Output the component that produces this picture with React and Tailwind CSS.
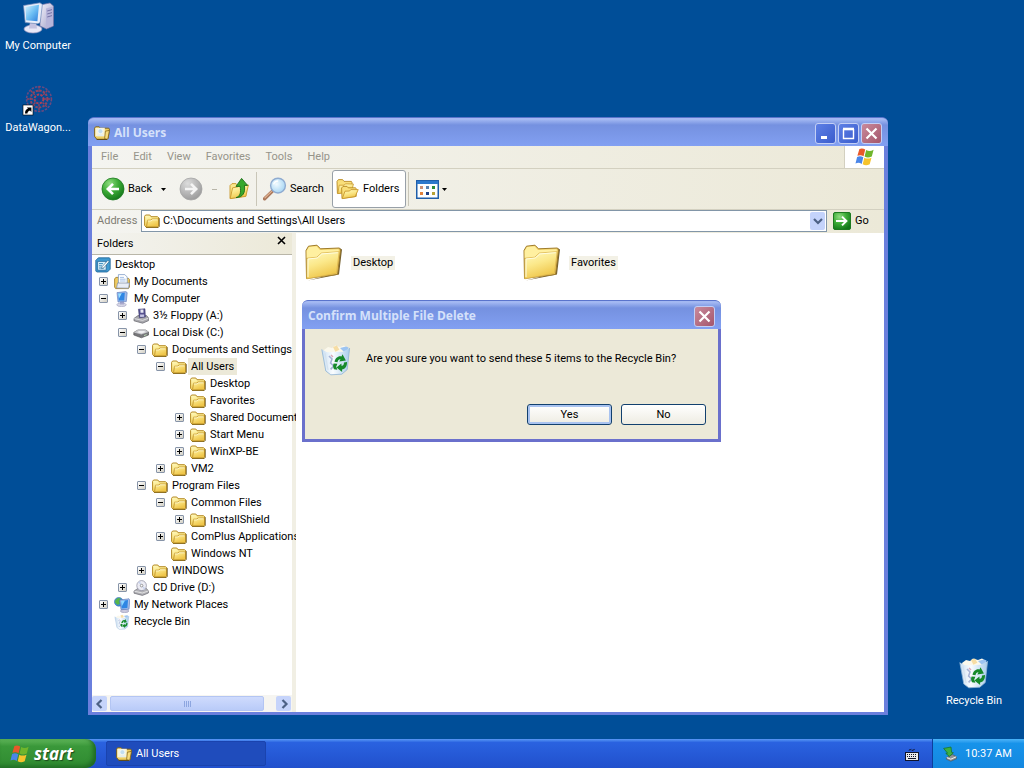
import React from 'react';
import clsx from 'clsx';

const menuItems = ['File', 'Edit', 'View', 'Favorites', 'Tools', 'Help'];

const tree = [
    { label: 'My Documents', icon: 'documents', state: 'closed' },
    {
        label: 'My Computer', icon: 'computer', state: 'open', children: [
            { label: '3½ Floppy (A:)', icon: 'floppy', state: 'closed' },
            {
                label: 'Local Disk (C:)', icon: 'disk', state: 'open', children: [
                    {
                        label: 'Documents and Settings', icon: 'folder', state: 'open', children: [
                            {
                                label: 'All Users', icon: 'folder', state: 'open', selected: true, children: [
                                    { label: 'Desktop', icon: 'folder' },
                                    { label: 'Favorites', icon: 'folder' },
                                    { label: 'Shared Documents', icon: 'folder', state: 'closed' },
                                    { label: 'Start Menu', icon: 'folder', state: 'closed' },
                                    { label: 'WinXP-BE', icon: 'folder', state: 'closed' },
                                ],
                            },
                            { label: 'VM2', icon: 'folder', state: 'closed' },
                        ],
                    },
                    {
                        label: 'Program Files', icon: 'folder', state: 'open', children: [
                            {
                                label: 'Common Files', icon: 'folder', state: 'open', children: [
                                    { label: 'InstallShield', icon: 'folder', state: 'closed' },
                                ],
                            },
                            { label: 'ComPlus Applications', icon: 'folder', state: 'closed' },
                            { label: 'Windows NT', icon: 'folder' },
                        ],
                    },
                    { label: 'WINDOWS', icon: 'folder', state: 'closed' },
                ],
            },
            { label: 'CD Drive (D:)', icon: 'cd', state: 'closed' },
        ],
    },
    { label: 'My Network Places', icon: 'network', state: 'closed' },
    { label: 'Recycle Bin', icon: 'bin' },
];

/* ---------- Icons ---------- */

// Gradients shared by all the icons below
const IconDefs = () => (
    <svg className="absolute h-0 w-0" aria-hidden="true">
        <defs>
            <linearGradient id="gFolder" x1="0" y1="0" x2="0.4" y2="1">
                <stop offset="0" stopColor="#fffbc4" />
                <stop offset="0.5" stopColor="#fbe88a" />
                <stop offset="1" stopColor="#efc64a" />
            </linearGradient>
            <linearGradient id="gScreen" x1="0" y1="0" x2="1" y2="1">
                <stop offset="0" stopColor="#d3f1ff" />
                <stop offset="0.5" stopColor="#6fc0f4" />
                <stop offset="1" stopColor="#2f7fdc" />
            </linearGradient>
            <linearGradient id="gCase" x1="0" y1="0" x2="1" y2="1">
                <stop offset="0" stopColor="#f4f3fb" />
                <stop offset="1" stopColor="#9d9cc6" />
            </linearGradient>
            <linearGradient id="gBin" x1="0" y1="0" x2="1" y2="0">
                <stop offset="0" stopColor="#c9def2" />
                <stop offset="0.4" stopColor="#fafdff" />
                <stop offset="1" stopColor="#a9cdec" />
            </linearGradient>
            <radialGradient id="gGreen" cx="0.35" cy="0.25" r="0.8">
                <stop offset="0" stopColor="#8fdc80" />
                <stop offset="0.5" stopColor="#3cab36" />
                <stop offset="1" stopColor="#13761a" />
            </radialGradient>
            <radialGradient id="gGrey" cx="0.35" cy="0.25" r="0.8">
                <stop offset="0" stopColor="#dcdcdc" />
                <stop offset="1" stopColor="#999999" />
            </radialGradient>
            <radialGradient id="gLens" cx="0.4" cy="0.4" r="0.7">
                <stop offset="0" stopColor="#f2fbff" />
                <stop offset="1" stopColor="#9fd2f2" />
            </radialGradient>
        </defs>
    </svg>
);

const FolderIcon = () => (
    <svg viewBox="0 0 16 16" className="h-4 w-4 shrink-0">
        <path d="M2 14.5h12.2l1-1V5.2l-.9-.6" fill="none" stroke="#6d5a22" strokeWidth="1" />
        <path d="M.6 12.4V3.3l1-1.3h4.2l1.2 1.7h6.6l.9.9v8.6l-.8.8H1.9z" fill="url(#gFolder)" stroke="#b58a24" strokeWidth="1" />
        <path d="M2.6 13.4l.9-6.2h3.2l1-1.2h6.4" fill="none" stroke="#c79a2e" strokeWidth="1" />
        <path d="M3.6 7.9h3.6l1-1.1h5.4" fill="none" stroke="#fffbd6" strokeWidth=".8" />
    </svg>
);

const BigFolderIcon = () => (
    <svg viewBox="0 0 38 38" className="h-[38px] w-[38px] shrink-0">
        <path d="M3 36.5L34 30.5 37 5.5l-2-1.3L32.5 29z" fill="#75602f" />
        <path d="M1.5 34.5L1 6.5 3.5 2.2l8.5-1 3.5 3.6 19-.8 1 2.2-3 24.2z" fill="#f2cf62" stroke="#9f7c2c" strokeWidth="1" />
        <path d="M1.6 7L4 3l7.6-.8L15 6l18.5-.7.6 3-18 .8-4.6 4.4-9.8.6z" fill="#fff0a0" />
        <path d="M1.8 34.8l.4-20.6 9.6-1 4.6-4.2 17.8-1.4-2.7 21.8z" fill="url(#gFolder)" stroke="#d9b04a" strokeWidth=".7" />
        <path d="M3 33V15l9.2-1 4.6-4.1 16-1.2" fill="none" stroke="#fffde0" strokeWidth="1" />
    </svg>
);

const SearchFolderIcon = () => (
    <svg viewBox="0 0 16 16" className="h-4 w-4 shrink-0">
        <path d="M.6 11.6V3.2l1-1.4h3.6l1 1.4h8.6l.6 1-1.2 9-1 1.2H3z" fill="#efcf62" stroke="#7b5d18" strokeWidth=".9" />
        <path d="M1.4 2.8h9.4v8.4H1.4z" fill="#f8f3d6" />
        <circle cx="6.4" cy="6.2" r="2.5" fill="#c3def0" stroke="#f8fcff" strokeWidth=".7" />
        <path d="M2.6 11.2c.5-2.6 6.6-2.8 7.6 0z" fill="#e3edf0" />
        <path d="M10.6 13.6l.8-7.4 4-.8-1.4 7.8-1 1.2z" fill="#f7dc7c" stroke="#7b5d18" strokeWidth=".7" />
        <path d="M2.6 14.4h10.6" stroke="#5e4a18" strokeWidth="1" />
    </svg>
);

const ComputerIcon = ({ className }) => (
    <svg viewBox="0 0 32 32" className={clsx('shrink-0', className)}>
        <path d="M18 3l10-2 3.5 3v20l-7 3-6.5-3z" fill="url(#gCase)" stroke="#7876a8" strokeWidth=".7" />
        <path d="M24 6.4l7-2v19.4l-7 2.8z" fill="#b7b5da" />
        <path d="M25.2 9l4.8-1.4M25.2 12l4.8-1.4M25.2 15l4.8-1.4" stroke="#7472a6" strokeWidth="1" />
        <ellipse cx="11" cy="27" rx="9" ry="4" fill="#e9e8f6" stroke="#9a98c0" strokeWidth=".7" />
        <path d="M8 20h6l1 6.5H7z" fill="#c4c2e0" />
        <path d="M1.5 3.5L18 .8l2.4 1.6-2.2 18.2-2.4 1.2-12.6-1.2z" fill="#e8eefa" stroke="#6d87b8" strokeWidth=".7" />
        <path d="M3.4 5L17 2.8l-1.6 16.4-11.2-.9z" fill="url(#gScreen)" />
    </svg>
);

const SmallComputerIcon = () => (
    <svg viewBox="0 0 16 16" className="h-4 w-4 shrink-0">
        <ellipse cx="7.5" cy="13.8" rx="4.8" ry="1.8" fill="#d7d7e6" stroke="#8f8fb2" strokeWidth=".5" />
        <path d="M6 10h4v3.5H6z" fill="#a9a9cc" />
        <path d="M3 1.6L11.8.6l1.4 1-.9 9-8.3.4z" fill="#9fb9e8" stroke="#5776b8" strokeWidth=".6" />
        <path d="M4 2.6l6.8-.8-.6 7.6-5.4.2z" fill="#2f86e4" />
        <path d="M4 2.6l3.8-.4L5 7.4z" fill="#9fe0ff" />
    </svg>
);

const RecycleIcon = ({ className }) => (
    <svg viewBox="0 0 32 32" className={clsx('shrink-0', className)}>
        <path d="M4 6l4-3 4 1 3-2.6L20 3l4-1.4L28 4v4L5 10z" fill="#fbf8ec" />
        <path d="M13 3l4-1.6 2.4 4.4-4 2z" fill="#f6dda4" />
        <path d="M20 4l6-1.6 2.6 1-3 6z" fill="#9cc4f2" />
        <path d="M1.8 5.4L7 8.2l16-.4L29.6 4l-2.4 21.6-5.4 4.6-11 .6L5.8 27z" fill="url(#gBin)" />
        <path d="M1.8 5.4L5.8 27l5 3.8 11-.6 5.4-4.6L29.6 4" fill="none" stroke="#8fb4d6" strokeWidth=".8" />
        <path d="M5 9l3 17" stroke="#d3e1ee" strokeWidth="1.2" />
        <path d="M9 12l3 3-1.4 4 3 3-3 3.4" fill="none" stroke="#a7b3d6" strokeWidth="1.6" />
        <path d="M11 11l2 2" stroke="#d9a9b8" strokeWidth="1.4" />
        <g fill="#168a2a">
            <path d="M14.5 17.8c.8-4 4-6.4 7-5.4l1-2.2 3.4 6.2-6.6 1 1.2-2.2c-1.6-.2-2.6 1-3 3z" />
            <path d="M27 18c.2 4.4-2 7.4-5 7.4l.2 2.6-5.8-4.6 5-4 .2 2.6c1.6-.2 2.4-1.4 2.4-3.4z" />
            <path d="M13.6 19.6l3.8.2-1.2 3 1.2 3-3.4-.6c-1-1.8-1.2-3.8-.4-5.6z" />
        </g>
    </svg>
);

const DocumentsIcon = () => (
    <svg viewBox="0 0 16 16" className="h-4 w-4 shrink-0">
        <path d="M.6 13V5l1.2-1.6h3l1 1h8.8l.8 1V13l-1 1.6H1.6z" fill="#f0cd62" stroke="#9c7720" strokeWidth=".8" />
        <path d="M4.4.6h6.4l2.4 2.4v8.4H4.4z" fill="#fff" stroke="#6f8fc0" strokeWidth=".7" />
        <path d="M6 3.4h4M6 5.2h5.6M6 7h5.6" stroke="#8fb0e0" strokeWidth=".8" />
        <path d="M2.6 14l.9-5h12l-1 5.2z" fill="#e9edf5" stroke="#7c8aa5" strokeWidth=".7" />
    </svg>
);

const FloppyIcon = () => (
    <svg viewBox="0 0 16 16" className="h-4 w-4 shrink-0">
        <path d="M1 10.4L5 7.6h8.6l2 2.4v2.6l-6 2.6L1 12.8z" fill="#a9a9ae" stroke="#63636a" strokeWidth=".7" />
        <path d="M1.4 10.6l8.2 1.8 5.8-2.2" fill="none" stroke="#e8e8ec" strokeWidth=".8" />
        <path d="M5.4 1.2L12 .8l.4 8.2-6 .8z" fill="#54508e" stroke="#37346a" strokeWidth=".5" />
        <path d="M7.4 1.4h3l.1 3.4h-3z" fill="#e7e7f4" />
        <path d="M7 6.6h4.2v2.2L7.2 9z" fill="#c7c6e6" />
    </svg>
);

const DiskIcon = () => (
    <svg viewBox="0 0 16 16" className="h-4 w-4 shrink-0">
        <path d="M.8 7.4L5 5h7.4L15.6 7v3l-7.2 2.8L.8 10z" fill="#77777a" stroke="#4b4b4e" strokeWidth=".6" />
        <path d="M.8 7.4L5 4.8h7.4L15.6 7l-7.2 2.6z" fill="#c4c4c8" />
        <path d="M4 7.2l2-1.2h5l2 1-4.6 1.4z" fill="#f0f0f2" />
        <path d="M11 10.6l2.6-1" stroke="#c8f0c0" strokeWidth=".8" />
    </svg>
);

const CdIcon = () => (
    <svg viewBox="0 0 16 16" className="h-4 w-4 shrink-0">
        <path d="M1 11l4-2.6h8.4L15.4 11v2l-6 2.4L1 13.2z" fill="#b1b1b6" stroke="#6a6a72" strokeWidth=".7" />
        <path d="M1.4 11.2l8 1.8 5.8-2" fill="none" stroke="#eee" strokeWidth=".8" />
        <ellipse cx="8.6" cy="5.6" rx="4.8" ry="5" fill="#ececf4" stroke="#8a8a9c" strokeWidth=".7" />
        <path d="M8.6 5.6L5 2.4l2-1.2zM8.6 5.6l4 2.6-1.4 1.8z" fill="#c9d3ec" />
        <circle cx="8.6" cy="5.6" r="1.3" fill="#fff" stroke="#777" strokeWidth=".7" />
    </svg>
);

const NetworkIcon = () => (
    <svg viewBox="0 0 16 16" className="h-4 w-4 shrink-0">
        <circle cx="4.8" cy="4.8" r="4.4" fill="#3f8fd6" stroke="#2a66a6" strokeWidth=".5" />
        <path d="M1.4 3l3-2.2 2.4 1-1.6 2.6 1 2-2.6 1.6L1 5.6z" fill="#58b64a" />
        <ellipse cx="10.6" cy="14" rx="4.2" ry="1.6" fill="#c9c9de" stroke="#8282a8" strokeWidth=".5" />
        <path d="M5.8 3l9.2-1.2.8.8-.8 9.6-8 .4z" fill="#a7bfea" stroke="#4f6fb6" strokeWidth=".6" />
        <path d="M7 4l7-.9-.6 8-5.8.3z" fill="#2f86e4" />
        <path d="M7 4l4-.5-3.2 5.7z" fill="#8fd8ff" />
    </svg>
);

const DesktopIcon = () => (
    <svg viewBox="0 0 16 16" className="h-4 w-4 shrink-0">
        <path d="M.8 3.4L3.4.8h11l.8 1v10.4L12.4 15H1.8l-1-1z" fill="#3f9ad0" stroke="#1c5f94" strokeWidth=".8" />
        <path d="M2.6 4.4h8.6v8.8H2.6z" fill="#d5eefa" stroke="#1c5f94" strokeWidth=".7" />
        <path d="M4 6.6h4M4 8.8h3M4 11h5" stroke="#2f7fb4" strokeWidth=".9" />
        <path d="M7 9.8l5.8-6.4 1.4 1.2L8.6 11l-2 .6z" fill="#fff" stroke="#285a80" strokeWidth=".6" />
    </svg>
);

const WindowsFlag = ({ className }) => (
    <svg viewBox="0 0 20 18" className={clsx('shrink-0', className)}>
        <path d="M4.4 1C6.6 0 8.4.4 10.2 1.6L8.6 8.2C6.6 7 4.8 6.8 2.4 7.8z" fill="#e8592a" />
        <path d="M11.2 2c2.2 1.2 4.4 1.4 7.4-.2l-1.8 6.8c-2.8 1.2-5 1.2-7.2 0z" fill="#6fb52c" />
        <path d="M2.1 8.9c2.4-1 4.2-.8 6.2.4l-1.6 6.6c-2-1.2-3.8-1.4-6.2-.4z" fill="#4a86e8" />
        <path d="M9.3 9.7c2.2 1.2 4.4 1.2 7.2 0l-1.8 6.5c-2.8 1.4-4.8 1.2-7 0z" fill="#f6c32c" />
    </svg>
);

const ArrowIcon = ({ back, muted }) => (
    <svg viewBox="0 0 24 24" className="h-6 w-6 shrink-0">
        <circle cx="12" cy="12" r="11" fill={muted ? 'url(#gGrey)' : 'url(#gGreen)'} stroke={muted ? '#a4a4a4' : '#1d7a20'} strokeWidth=".8" />
        <path
            d={back ? 'M18 12H7.5M12 6.8L6.8 12l5.2 5.2' : 'M6 12h10.5M12 6.8l5.2 5.2-5.2 5.2'}
            fill="none" stroke={muted ? '#f4f4f4' : '#fff'} strokeWidth="2.6"
        />
    </svg>
);

const UpFolderIcon = () => (
    <svg viewBox="0 0 22 24" className="h-6 w-[22px] shrink-0">
        <path d="M2 21.4V8.6l2-2h4l1.4 1.6h8.4V19z" fill="#fbe78c" stroke="#c9982c" strokeWidth=".9" />
        <path d="M2.2 21.6l2.4-10.8 5.4-1 1.4-1.4 9-.4-2.6 11.4z" fill="url(#gFolder)" stroke="#c9982c" strokeWidth=".9" />
        <path d="M8 20.6c4.4-1.2 5-4.8 4.2-11.2H8L13.6 1.4l6 7h-3.2C17.4 15.6 15.2 20.2 8 20.6z" fill="#37a82c" stroke="#1a6d17" strokeWidth=".9" />
    </svg>
);

const MagnifierIcon = () => (
    <svg viewBox="0 0 24 24" className="h-6 w-6 shrink-0">
        <path d="M1.6 21.8l7.6-7.4" stroke="#a9775a" strokeWidth="3.4" strokeLinecap="round" />
        <path d="M2 20.8l6.6-6.4" stroke="#e0b291" strokeWidth="1.2" strokeLinecap="round" />
        <circle cx="15" cy="8.6" r="7.4" fill="url(#gLens)" stroke="#8fabd0" strokeWidth="1.4" />
        <path d="M10.6 7.4c.6-2.2 2.4-3.4 4.6-3.4" fill="none" stroke="#fff" strokeWidth="1.4" />
    </svg>
);

const FoldersIcon = () => (
    <svg viewBox="0 0 23 22" className="h-[22px] w-[23px] shrink-0">
        <path d="M1.4 15.4L1 3.4 2.4 1.6h4.2L8 3.4h7.4l.6 1.2v9z" fill="#f9df7a" stroke="#b98a22" strokeWidth=".9" />
        <path d="M1.8 15.6l1.4-8.4h5l1.2-1.4 8 .2-1.8 7.8z" fill="url(#gFolder)" stroke="#c9982c" strokeWidth=".8" />
        <path d="M6 20.4L5.6 10 7 8.4h4l1.2 1.4h7.4l.6 1v7.6z" fill="#f9df7a" stroke="#b98a22" strokeWidth=".9" />
        <path d="M6.2 20.6L9 13.2l4.6-.2 1.2-1.4h7.4l-3 7z" fill="url(#gFolder)" stroke="#c9982c" strokeWidth=".9" />
    </svg>
);

const ViewsIcon = () => (
    <svg viewBox="0 0 23 19" className="h-[19px] w-[23px] shrink-0">
        <rect x=".75" y=".75" width="21.5" height="17.5" fill="#fdfeff" stroke="#1f5eaa" strokeWidth="1.5" />
        <path d="M1 1h21v3H1z" fill="#2c78cc" />
        <path d="M4 6h3v3H4z" fill="#c98f76" />
        <path d="M10 6h3v3h-3z" fill="#5a82b0" />
        <path d="M16 6h3v3h-3z" fill="#2b8a3a" />
        <path d="M4 12h3v3H4z" fill="#e0803a" />
        <path d="M10 12h3v3h-3z" fill="#1c3f86" />
        <path d="M16 12h3v3h-3z" fill="#b5a136" />
    </svg>
);

const Caret = ({ muted }) => (
    <svg viewBox="0 0 5 3" className="h-[3px] w-[5px] shrink-0">
        <path d={muted ? 'M0 1h5v1H0z' : 'M0 0h5L2.5 3z'} fill={muted ? '#b8b5a8' : '#000'} />
    </svg>
);

const Chevron = ({ d }) => (
    <svg viewBox="0 0 10 10" className="h-[10px] w-[10px]">
        <path d={d} fill="none" stroke="#4d6185" strokeWidth="2.2" />
    </svg>
);

const ShortcutIcon = () => (
    <svg viewBox="0 0 32 32" className="h-8 w-8">
        <g fill="none" stroke="#8d4663" strokeWidth="2" strokeDasharray="2.4 1.2">
            <circle cx="17" cy="15" r="4.4" stroke="#a8405a" />
            <circle cx="17" cy="15" r="8.4" />
            <circle cx="17" cy="15" r="12.4" stroke="#6a4a80" strokeWidth="1.6" />
            <path d="M17 2v7M17 20v8M5 15h7M22 15h8M8.6 6.6l5 5M20.6 18.6l5 5M25.4 6.6l-5 5M13.4 18.6l-5 5" stroke="#94405c" strokeWidth="1.4" />
        </g>
        <circle cx="17" cy="15" r="1.8" fill="#3a2f78" />
        <rect x="1" y="21" width="10" height="10" fill="#fff" stroke="#000" strokeWidth=".6" />
        <path d="M3 29.4c0-2.6 1-4 3-4.6l-1.2-1.4h4.6V28L8 26.6c-1.6.4-2.2 1.4-2.6 2.8z" fill="#000" />
    </svg>
);

const KeyboardIcon = () => (
    <svg viewBox="0 0 14 14" className="h-[14px] w-[14px]">
        <path d="M4 3.5c0-1.4 1.8-.4 2.4-1.2M7 4c0-1.6 2-.6 2.6-1.6" fill="none" stroke="#10142c" strokeWidth="1" />
        <rect x=".5" y="5.5" width="13" height="8" fill="#e9e9ea" stroke="#10142c" />
        <path d="M2 7.5h10M2 9.5h10" stroke="#10142c" strokeWidth="1" strokeDasharray="1 1" />
        <path d="M3 11.5h8" stroke="#10142c" strokeWidth="1" />
    </svg>
);

const EjectIcon = () => (
    <svg viewBox="0 0 16 16" className="h-4 w-4">
        <path d="M4.4 11.6l6-3 4 2v2.2l-5.6 2.4-4.4-2z" fill="#8d9298" stroke="#4b5058" strokeWidth=".6" />
        <path d="M4.8 11.6l4 1.6 5.4-2.4" fill="none" stroke="#f2f2f2" strokeWidth="1" />
        <path d="M1.6 2.4L9 1l.6 5.4 1.8.4-4 3.6-3.6-3 1.8-.2z" fill="#3cb043" stroke="#15701f" strokeWidth=".7" />
    </svg>
);

const treeIcons = {
    documents: <DocumentsIcon />,
    computer: <SmallComputerIcon />,
    floppy: <FloppyIcon />,
    disk: <DiskIcon />,
    folder: <FolderIcon />,
    cd: <CdIcon />,
    network: <NetworkIcon />,
    bin: <RecycleIcon className="h-4 w-4" />,
};

/* ---------- Window parts ---------- */

const TitleButton = ({ label, close, children }) => (
    <button
        type="button"
        aria-label={label}
        className={clsx(
            'flex h-[21px] w-[21px] items-center justify-center rounded-[3px] border border-[#c3cff5]',
            close ? 'bg-linear-to-br from-[#c98a9c] to-[#a4566c]' : 'bg-linear-to-br from-[#5e80e6] to-[#3a5ccc]'
        )}
    >
        <svg viewBox="0 0 15 15" className="h-[15px] w-[15px]" fill="none" stroke="#fff">{children}</svg>
    </button>
);

const CloseButton = () => (
    <TitleButton label="Close" close>
        <path d="M2.5 2.5l10 10M12.5 2.5l-10 10" strokeWidth="2.2" />
    </TitleButton>
);

const TitleBar = ({ title, icon, children }) => (
    <header className="flex h-[29px] shrink-0 items-center gap-1 rounded-t-[6px] border-t border-[#5a74cc] bg-linear-to-b from-[#a3b8f2] from-5% via-[#7591e0] via-25% to-[#82a0f2] px-[6px] pt-[2px]">
        {icon}
        <h1 className="flex-1 font-['Open_Sans',sans-serif] text-[12px] leading-5 font-bold whitespace-nowrap text-[#d5e1fa]">{title}</h1>
        <div className="flex gap-[2px]">{children}</div>
    </header>
);

const Separator = () => <div className="h-[34px] w-px bg-[#c9c6b8]" />;

const TreeNode = ({ node }) => (
    <li>
        <div className="flex h-[17px] items-center">
            <div className="w-[19px] shrink-0 pl-1">
                {node.state && (
                    <button
                        type="button"
                        aria-label={`${node.state === 'open' ? 'Collapse' : 'Expand'} ${node.label}`}
                        className="block h-[9px] w-[9px] rounded-[1px] border border-[#8794a8] bg-linear-to-br from-white to-[#d2cfc4]"
                    >
                        <svg viewBox="0 0 7 7" className="h-[7px] w-[7px]" fill="#000">
                            <path d={node.state === 'open' ? 'M1 3h5v1H1z' : 'M1 3h5v1H1zM3 1h1v5H3z'} />
                        </svg>
                    </button>
                )}
            </div>
            {treeIcons[node.icon]}
            <span className={clsx('ml-px px-[3px] leading-[17px] whitespace-nowrap', node.selected && 'bg-[#ece9d8]')}>{node.label}</span>
        </div>
        {node.children && (
            <ul className="pl-[19px]">
                {node.children.map((child) => <TreeNode key={child.label} node={child} />)}
            </ul>
        )}
    </li>
);

const FolderTree = () => (
    <aside className="relative z-10 flex w-[200px] shrink-0 flex-col">
        <div className="flex h-[22px] shrink-0 items-center justify-between border-b border-[#b9b6a8] bg-linear-to-r from-[#f3f3ef] to-[#ece9d8] pr-[6px] pl-[5px]">
            <h2>Folders</h2>
            <button type="button" aria-label="Close folders" className="pb-[6px]">
                <svg viewBox="0 0 9 9" className="h-[9px] w-[9px]">
                    <path d="M1 1l7 7M8 1L1 8" stroke="#000" strokeWidth="1.6" />
                </svg>
            </button>
        </div>
        {/* long labels run on over the splitter */}
        <div className="-mr-1 min-h-0 flex-1 overflow-hidden pt-px pl-[3px]">
            <div className="flex h-[17px] items-center gap-1">
                <DesktopIcon />
                <span>Desktop</span>
            </div>
            <ul>
                {tree.map((node) => <TreeNode key={node.label} node={node} />)}
            </ul>
        </div>
        <div className="flex h-[17px] shrink-0 items-center gap-[3px] bg-[#f6f5f1] pr-px">
            <button type="button" aria-label="Scroll left" className="flex h-[15px] w-[15px] items-center justify-center rounded-[2px] bg-[#c6d4fb]">
                <Chevron d="M6.5 1L2.5 5l4 4" />
            </button>
            <div className="flex h-[15px] w-[154px] items-center justify-center gap-px rounded-[2px] border border-[#b3c5f3] bg-linear-to-b from-[#cfdbfd] to-[#b9cbf8]">
                {[0, 1, 2, 3].map((i) => <i key={i} className="h-[6px] w-px bg-[#8da6e0]" />)}
            </div>
            <div className="flex-1" />
            <button type="button" aria-label="Scroll right" className="flex h-[15px] w-[15px] items-center justify-center rounded-[2px] bg-[#c6d4fb]">
                <Chevron d="M3.5 1l4 4-4 4" />
            </button>
        </div>
    </aside>
);

const Toolbar = () => (
    <div className="flex h-[41px] shrink-0 items-center border-b border-[#d3d0c0] pl-[9px]">
        <button type="button" className="flex items-center gap-[3px]">
            <ArrowIcon back />
            <span className="w-[30px] text-left">Back</span>
            <Caret />
        </button>
        <button type="button" aria-label="Forward" className="ml-[13px] flex items-center gap-[9px]">
            <ArrowIcon muted />
            <Caret muted />
        </button>
        <button type="button" aria-label="Up" className="mr-[6px] ml-[11px]"><UpFolderIcon /></button>
        <Separator />
        <button type="button" className="mx-[6px] flex w-[63px] items-center gap-[3px]">
            <MagnifierIcon />
            <span>Search</span>
        </button>
        <button type="button" className="flex h-[38px] w-[74px] items-center gap-1 rounded-[3px] border border-[#98a0a8] bg-white pl-[3px]">
            <FoldersIcon />
            <span>Folders</span>
        </button>
        <div className="mr-[7px] ml-[2px]"><Separator /></div>
        <button type="button" aria-label="Views" className="flex items-center gap-[3px]">
            <ViewsIcon />
            <Caret />
        </button>
    </div>
);

const AddressBar = () => (
    <form className="flex h-[23px] shrink-0 items-start pl-[5px]">
        <label htmlFor="address" className="w-[44px] leading-[22px] text-[#7f7d74]">Address</label>
        <div className="flex h-[22px] flex-1 items-center border border-[#8296a8] bg-white pr-px pl-[2px]">
            <FolderIcon />
            <input id="address" type="text" defaultValue="C:\Documents and Settings\All Users" className="ml-[3px] min-w-0 flex-1 bg-transparent outline-none" />
            <button type="button" aria-label="Show addresses" className="flex h-[18px] w-[15px] items-center justify-center rounded-[2px] bg-[#c4d3fb]">
                <Chevron d="M1 3l4 4 4-4" />
            </button>
        </div>
        <button type="button" className="ml-[6px] flex h-[22px] w-[51px] items-center gap-[4px]">
            <svg viewBox="0 0 18 18" className="h-[18px] w-[18px]">
                <rect x=".5" y=".5" width="17" height="17" rx="1.5" fill="url(#gGreen)" stroke="#1d7a20" />
                <path d="M3 9h10M9 4.6L13.4 9 9 13.4" fill="none" stroke="#fff" strokeWidth="2" />
            </svg>
            Go
        </button>
    </form>
);

const ExplorerWindow = () => (
    <section className="absolute top-[117px] right-[136px] bottom-[24px] left-[88px] flex flex-col rounded-t-[8px] bg-[#6a7fdd]">
        <TitleBar title="All Users" icon={<SearchFolderIcon />}>
            <TitleButton label="Minimize"><path d="M3 11.5h6" strokeWidth="3" /></TitleButton>
            <TitleButton label="Maximize"><path d="M2.5 3v9.5h10V3M2 3h11" strokeWidth="1.4" /><path d="M2 3h11" strokeWidth="2.6" /></TitleButton>
            <CloseButton />
        </TitleBar>
        <div className="mx-1 mb-[3px] flex min-h-0 flex-1 flex-col bg-linear-to-r from-[#f4f4f0] to-[#ece9d8]">
            <nav className="flex h-[23px] shrink-0 items-center border-b border-[#d3d0c0]">
                <ul className="flex flex-1 gap-[15px] pl-[9px] text-[#96948a]">
                    {menuItems.map((item) => <li key={item}><button type="button">{item}</button></li>)}
                </ul>
                <div className="flex h-full w-[40px] items-center justify-center border-l border-[#d3d0c0] bg-white">
                    <WindowsFlag className="h-[18px] w-5" />
                </div>
            </nav>
            <Toolbar />
            <AddressBar />
            <div className="flex min-h-0 flex-1 bg-white">
                <FolderTree />
                <div className="w-1 shrink-0 bg-[#f1efe4]" />
                <main className="flex-1 pt-[11px] pl-[9px]">
                    <ul className="grid grid-cols-[repeat(auto-fill,218px)]">
                        {['Desktop', 'Favorites'].map((name) => (
                            <li key={name} className="flex items-center gap-2">
                                <BigFolderIcon />
                                <span className="bg-[#f3f1e6] px-[2px]">{name}</span>
                            </li>
                        ))}
                    </ul>
                </main>
            </div>
        </div>
    </section>
);

const dialogButton = 'h-[21px] w-[85px] rounded-[3px] border border-[#12406e] bg-linear-to-b from-white to-[#eeece2]';

const ConfirmDialog = () => (
    <section role="dialog" aria-label="Confirm Multiple File Delete" className="absolute top-[300px] left-[302px] z-20 flex w-[419px] flex-col rounded-t-[8px] bg-[#6a70cc]">
        <TitleBar title="Confirm Multiple File Delete"><CloseButton /></TitleBar>
        <div className="mx-[3px] mb-[3px] bg-[#ece9d8] px-3 pt-[15px] pb-[14px]">
            <div className="flex items-start gap-[14px] pl-[3px]">
                <RecycleIcon className="h-8 w-8" />
                <p className="pt-2">Are you sure you want to send these 5 items to the Recycle Bin?</p>
            </div>
            <div className="mt-7 flex justify-end gap-[9px]">
                <button type="button" className={clsx(dialogButton, 'inset-ring-2 inset-ring-[#a9c3f0]')}>Yes</button>
                <button type="button" className={dialogButton}>No</button>
            </div>
        </div>
    </section>
);

const Shortcut = ({ label, className, children }) => (
    <a href="#" className={clsx('absolute flex w-[76px] flex-col items-center gap-[5px] whitespace-nowrap text-white', className)}>
        {children}
        <span>{label}</span>
    </a>
);

const Taskbar = () => (
    <footer className="flex h-[29px] shrink-0 items-stretch bg-linear-to-b from-[#5a98f6] via-[#2a62e0] via-12% to-[#2150cc] text-white">
        <button type="button" className="flex w-[96px] items-center gap-1 rounded-r-[10px] bg-linear-to-b from-[#5fb65a] via-[#3a983a] via-25% to-[#2f8a30] pl-[10px] shadow-[inset_-3px_-2px_4px_#1f6a24]">
            <WindowsFlag className="h-[18px] w-5" />
            <span className="font-['Open_Sans',sans-serif] text-[17px] leading-5 font-bold italic [text-shadow:1px_1px_1px_#1b4a1c]">start</span>
        </button>
        <button type="button" className="my-[2px] ml-[10px] flex w-[160px] items-center gap-1 rounded-[2px] border border-[#1a43ae] bg-[#1f4cbc] pl-[9px]">
            <SearchFolderIcon />
            All Users
        </button>
        <div className="flex-1" />
        <div className="flex items-center pr-[13px]"><KeyboardIcon /></div>
        <div className="flex w-[92px] items-center gap-[7px] border-l border-[#0d3f9c] bg-linear-to-b from-[#4ab4f8] via-[#1793ea] via-15% to-[#1488e0] pl-[9px]">
            <EjectIcon />
            <time>10:37 AM</time>
        </div>
    </footer>
);

const App = () => (
    <div className="flex h-screen flex-col overflow-hidden bg-[#004e98] font-['Roboto','Liberation_Sans',sans-serif] text-[11px] leading-[14px] text-black">
        <IconDefs />
        <div className="relative min-h-0 flex-1">
            <Shortcut label="My Computer" className="top-[2px] left-0"><ComputerIcon className="h-8 w-8" /></Shortcut>
            <Shortcut label="DataWagon..." className="top-[84px] left-0"><ShortcutIcon /></Shortcut>
            <Shortcut label="Recycle Bin" className="right-[12px] bottom-[31px]"><RecycleIcon className="h-8 w-8" /></Shortcut>
            <ExplorerWindow />
            <ConfirmDialog />
        </div>
        <Taskbar />
    </div>
);

export default App;
